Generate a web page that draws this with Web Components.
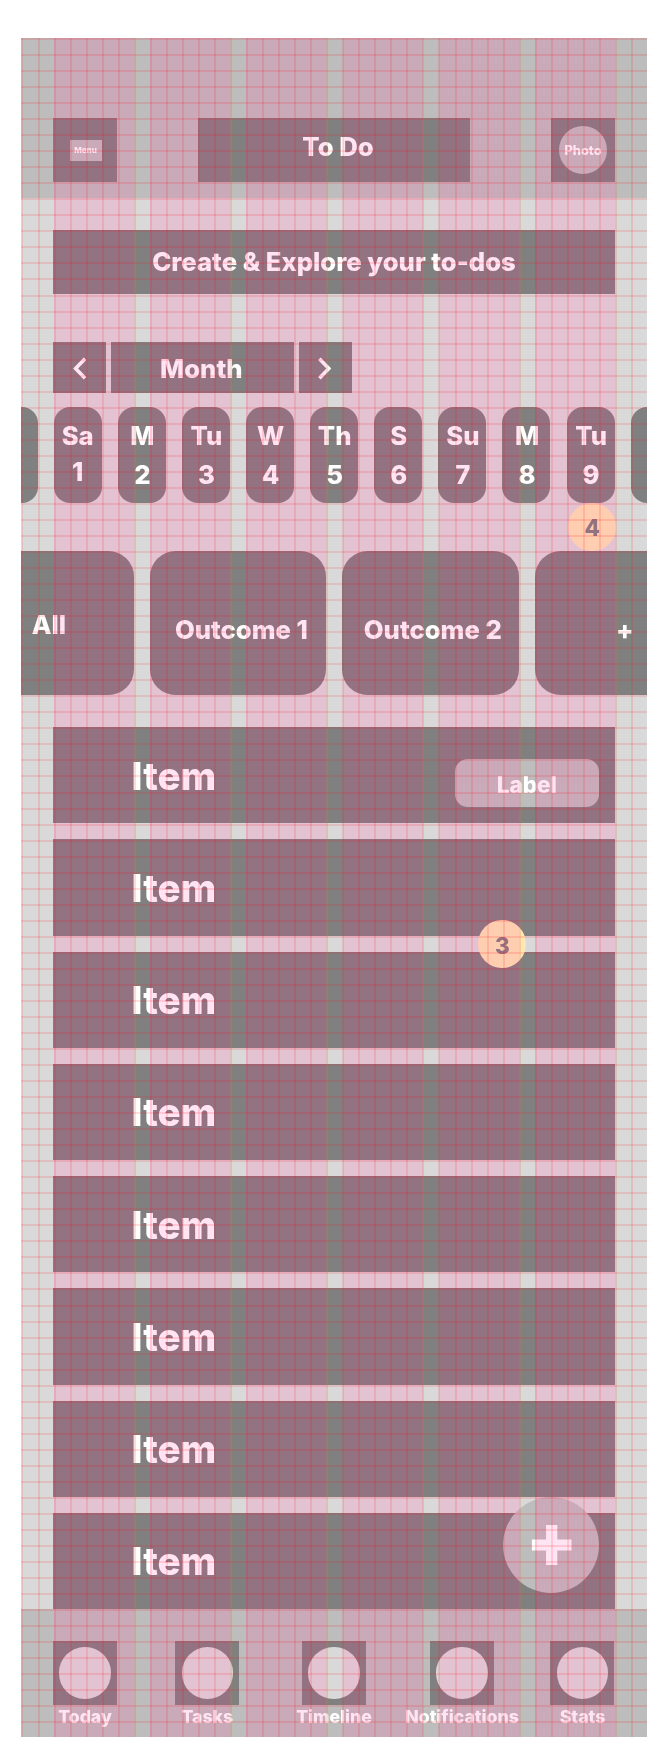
<!DOCTYPE html>
<html lang="en">
<head>
<meta charset="utf-8">
<title>To Do wireframe</title>
<style>
body{margin:0;background:#fff;font-family:Inter,"Liberation Sans",sans-serif;font-weight:800;color:#fff}
</style>
</head>
<body>
<todo-screen></todo-screen>
<script>
class WfBox extends HTMLElement{
  constructor(){
    super();
    this.attachShadow({mode:'open'}).innerHTML=`<style>
      :host{display:flex;flex:none;box-sizing:border-box;align-items:center;justify-content:center;
        width:var(--w,64px);height:var(--h,64px);background:var(--bg,#808080);border-radius:var(--r,0);
        font-size:var(--fs,25.67px);line-height:1;white-space:nowrap}
      div{display:flex;align-items:center;transform:translate(var(--dx,0px),var(--dy,0px))}
    </style><div><slot></slot></div>`;
  }
}
customElements.define('wf-box',WfBox);

class WfDay extends HTMLElement{
  constructor(){
    super();
    this.attachShadow({mode:'open'}).innerHTML=`<style>
      :host{display:flex;flex:none;flex-direction:column;align-items:center;box-sizing:border-box;width:48px;height:96px;
        padding:10.2px 0 0 1px;border-radius:16px;background:#808080;font-size:25.67px;line-height:38.5px}
      :host([tight]){line-height:36px;padding-top:10.6px;padding-left:0}
    </style><slot name="name"></slot><slot name="date"></slot>`;
  }
}
customElements.define('wf-day',WfDay);

class WfItem extends HTMLElement{
  constructor(){
    super();
    this.attachShadow({mode:'open'}).innerHTML=`<style>
      :host{display:flex;box-sizing:border-box;align-items:center;justify-content:space-between;height:96.25px;
        padding:1px 16px 0 78.6px;background:#808080;font-size:38.5px;line-height:46px}
    </style><span><slot></slot></span><slot name="tag"></slot>`;
  }
}
customElements.define('wf-item',WfItem);

class WfTab extends HTMLElement{
  constructor(){
    super();
    this.attachShadow({mode:'open'}).innerHTML=`<style>
      :host{display:flex;flex:none;flex-direction:column;align-items:center;width:64px;font-size:17.64px;line-height:21px;white-space:nowrap}
      .b{display:flex;align-items:center;justify-content:center;width:64px;height:64px;background:#808080}
      i{width:51.3px;height:51.3px;border-radius:50%;background:#d9d9d9}
      span{margin-top:1px}
    </style><div class="b"><i></i></div><span><slot></slot></span>`;
  }
}
customElements.define('wf-tab',WfTab);

/* Layout guides: six columns and a square grid, drawn above the content */
class WfGuides extends HTMLElement{
  constructor(){
    super();
    const W=626,H=1699;
    let cols='',lines='';
    for(let k=0;k<6;k++){
      const x=Math.round(54+96.2*k)-21;
      cols+=`<rect x="${x}" y="0" width="80" height="${H}"/>`;
    }
    for(let k=0;k<40;k++){
      const gutter=k%6===1&&k>1;
      lines+=`<rect class="${gutter?'g':'l'}" x="${Math.round(0.7+16.03*k)}" y="0" width="${k?2:1}" height="${H}"/>`;
    }
    for(let k=0;k<106;k++)lines+=`<rect class="l" x="0" y="${Math.round(16.032*k)}" width="${W}" height="2"/>`;
    const svg=(c,s)=>`<svg class="${c}" width="${W}" height="${H}" viewBox="0 0 ${W} ${H}" shape-rendering="crispEdges">${s}</svg>`;
    this.attachShadow({mode:'open'}).innerHTML=`<style>
      :host{display:block;position:absolute;inset:0;pointer-events:none}
      svg{display:block;position:absolute;inset:0}
      .cols{fill:#ff0088;fill-opacity:.105}
      .glow{fill:#060002;mix-blend-mode:plus-lighter}
      .l{fill:#ff1010;fill-opacity:.135}
      .g{fill:#d87040;fill-opacity:.22}
    </style>${svg('cols',cols)}${svg('glow',cols)}${svg('lines',lines)}`;
  }
}
customElements.define('wf-guides',WfGuides);

class TodoScreen extends HTMLElement{
  constructor(){
    super();
    const days=[['',''],['Sa',1],['M',2],['Tu',3],['W',4],['Th',5],['S',6],['Su',7],['M',8],['Tu',9],['','']]
      .map(([n,d])=>`<wf-day ${n==='Sa'?'tight':''}><span slot="name">${n}</span><span slot="date">${d}</span></wf-day>`).join('');
    const items=Array.from({length:8},(_,i)=>`<wf-item>Item${i?'':'<wf-box slot="tag" class="label">Label</wf-box>'}</wf-item>`).join('');
    this.attachShadow({mode:'open'}).innerHTML=`<style>
      :host{display:block;position:relative;box-sizing:border-box;width:626px;height:1699px;margin:38px 0 0 21px;
        overflow:hidden;background:#d9d9d9}
      header{display:flex;justify-content:space-between;box-sizing:border-box;height:160px;padding:80px 32px 0;background:#bdbdbd}
      .menu{--w:32px;--h:21px;--bg:#bdbdbd;--fs:8.02px;margin-left:1px}
      .title{--w:272px;--dx:4px;--dy:-3px}
      .photo{--w:48px;--h:48px;--r:50%;--bg:#bdbdbd;--fs:12.83px;--dy:.7px}
      .banner{--w:562px;--dy:0px;margin:32px 0 0 32px}
      .month{display:flex;gap:5px;margin:48px 0 0 32px}
      .month wf-box{--h:51px;--w:53px}
      .month .m{--w:183px;--dx:-1.2px;--dy:1px}
      .days{display:flex;gap:16.12px;margin:14px 0 0 -31.4px}
      .cards{display:flex;gap:16px;margin:48px 0 0 -63.5px}
      .cards wf-box{--w:176.4px;--h:144px;--r:25.67px}
      .list{display:flex;flex-direction:column;gap:16.03px;margin:32px 32px 0}
      .label{--w:144.4px;--h:48px;--r:12.83px;--bg:#bdbdbd;--fs:22.46px;--dy:2px;margin-top:15px}
      footer{display:flex;box-sizing:border-box;height:130px;padding:32px 0 0 32px;background:#bdbdbd}
      .t1{margin-left:58.3px}.t2{margin-left:62.7px}.t3{margin-left:64px}.t4{margin-left:56.5px}
      .over{position:absolute}
      .badge{--w:48px;--h:48px;--r:50%;--bg:#ffe6b3;--fs:22.46px;color:#808080}
      .fab{--w:96.3px;--h:96.3px;--r:50%;--bg:#bdbdbd;--dx:.7px;left:481.6px;top:1459px}
      svg{display:block}
    </style>
    <header>
      <wf-box><wf-box class="menu">Menu</wf-box></wf-box>
      <wf-box class="title">To Do</wf-box>
      <wf-box><wf-box class="photo">Photo</wf-box></wf-box>
    </header>
    <wf-box class="banner">Create &amp; Explore your to-dos</wf-box>
    <div class="month">
      <wf-box style="--dx:-.2px;--dy:.5px"><svg width="14" height="24" viewBox="0 0 14 24" fill="none" stroke="#fff" stroke-width="3.6"><path d="M12.2 2.2 2.8 12l9.4 9.8"/></svg></wf-box>
      <wf-box class="m">Month</wf-box>
      <wf-box style="--dx:-1.4px;--dy:.5px"><svg width="14" height="24" viewBox="0 0 14 24" fill="none" stroke="#fff" stroke-width="3.6"><path d="M1.8 2.2 11.2 12l-9.4 9.8"/></svg></wf-box>
    </div>
    <div class="days">${days}</div>
    <div class="cards">
      <wf-box style="--dx:3.3px;--dy:2px">All</wf-box>
      <wf-box style="--dx:3.3px;--dy:7px">Outcome 1</wf-box>
      <wf-box style="--dx:2.3px;--dy:7px">Outcome 2</wf-box>
      <wf-box style="--dx:2px;--dy:7px">+</wf-box>
    </div>
    <div class="list">${items}</div>
    <footer>
      <wf-tab>Today</wf-tab><wf-tab class="t1">Tasks</wf-tab><wf-tab class="t2">Timeline</wf-tab><wf-tab class="t3">Notifications</wf-tab><wf-tab class="t4">Stats</wf-tab>
    </footer>
    <wf-box class="over badge" style="left:547.2px;top:465px;--dy:1px">4</wf-box>
    <wf-box class="over badge" style="left:457.3px;top:882px;--dy:2px">3</wf-box>
    <wf-box class="over fab"><svg width="40" height="40" viewBox="0 0 40 40" fill="#fff"><path d="M14.4 0h11.2v14.4H40v11.2H25.6V40H14.4V25.6H0V14.4h14.4z"/></svg></wf-box>
    <wf-guides></wf-guides>`;
  }
}
customElements.define('todo-screen',TodoScreen);
</script>
</body>
</html>
